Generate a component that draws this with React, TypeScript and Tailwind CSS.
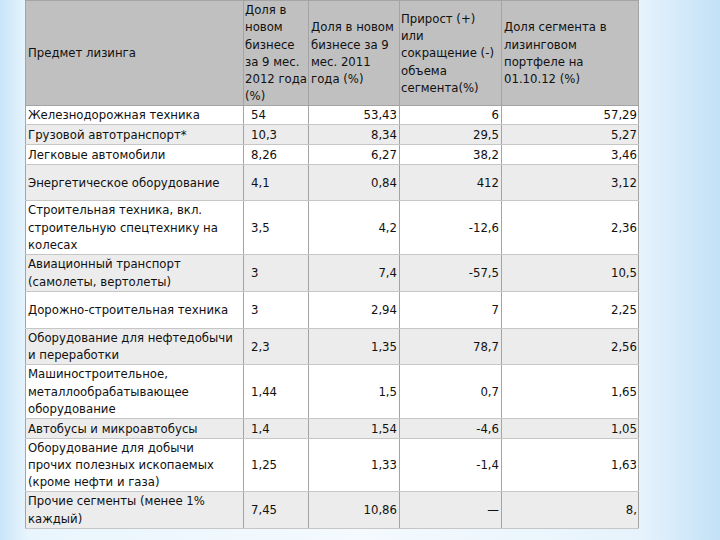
const rows: { name: string[]; a: string; b: string; c: string; d: string; h: string }[] = [
  { name: ["Железнодорожная техника"], a: "54", b: "53,43", c: "6", d: "57,29", h: "h-[19px]" },
  { name: ["Грузовой автотранспорт*"], a: "10,3", b: "8,34", c: "29,5", d: "5,27", h: "h-[20px]" },
  { name: ["Легковые автомобили"], a: "8,26", b: "6,27", c: "38,2", d: "3,46", h: "h-[20px]" },
  { name: ["Энергетическое оборудование"], a: "4,1", b: "0,84", c: "412", d: "3,12", h: "h-[36px]" },
  {
    name: ["Строительная техника, вкл.", "строительную спецтехнику на", "колесах"],
    a: "3,5", b: "4,2", c: "-12,6", d: "2,36", h: "h-[54px]",
  },
  { name: ["Авиационный транспорт", "(самолеты, вертолеты)"], a: "3", b: "7,4", c: "-57,5", d: "10,5", h: "h-[37px]" },
  { name: ["Дорожно-строительная техника"], a: "3", b: "2,94", c: "7", d: "2,25", h: "h-[37px]" },
  { name: ["Оборудование для нефтедобычи", "и переработки"], a: "2,3", b: "1,35", c: "78,7", d: "2,56", h: "h-[36px]" },
  {
    name: ["Машиностроительное,", "металлообрабатывающее", "оборудование"],
    a: "1,44", b: "1,5", c: "0,7", d: "1,65", h: "h-[54px]",
  },
  { name: ["Автобусы и микроавтобусы"], a: "1,4", b: "1,54", c: "-4,6", d: "1,05", h: "h-[20px]" },
  {
    name: ["Оборудование для добычи", "прочих полезных ископаемых", "(кроме нефти и газа)"],
    a: "1,25", b: "1,33", c: "-1,4", d: "1,63", h: "h-[53px]",
  },
  { name: ["Прочие сегменты (менее 1%", "каждый)"], a: "7,45", b: "10,86", c: "—", d: "8,", h: "h-[37px]" },
];

const Lines = ({ lines }: { lines: string[] }) => (
  <>
    {lines.map((l, i) => (
      <div key={i}>{l}</div>
    ))}
  </>
);

const cell = "border-y border-[#c6c6c6] border-x border-x-[#a4a4a4] p-0 overflow-hidden whitespace-nowrap";
const head = "border border-[#a4a4a4] p-0 text-left font-normal whitespace-nowrap overflow-hidden";

export default function App() {
  return (
    <div className="w-[720px] h-[540px] overflow-hidden bg-[linear-gradient(to_right,#c9e5f8_0%,#e9f5fd_4%,#f4fafe_50%,#e6f3fc_89%,#c3e1f6_100%)] font-['DejaVu_Sans_Condensed','DejaVu_Sans',sans-serif] text-[13px] leading-[17.3px] text-[#111]">
      <table className="ml-[25px] w-[613px] table-fixed border-collapse border-t border-[#9a9a9a]">
        <colgroup>
          <col className="w-[218px]" />
          <col className="w-[65px]" />
          <col className="w-[91px]" />
          <col className="w-[102px]" />
          <col className="w-[137px]" />
        </colgroup>
        <thead>
          <tr className="h-[104px] bg-[#c0c0c0] align-middle">
            <th className={`${head} pl-[2px]`}>Предмет лизинга</th>
            <th className={`${head} pl-[1px]`}>
              <Lines lines={["Доля в", "новом", "бизнесе", "за 9 мес.", "2012 года", "(%)"]} />
            </th>
            <th className={`${head} pl-[2px]`}>
              <Lines lines={["Доля в новом", "бизнесе за 9", "мес. 2011", "года (%)"]} />
            </th>
            <th className={`${head} pl-[1px]`}>
              <Lines lines={["Прирост (+)", "или", "сокращение (-)", "объема", "сегмента(%)"]} />
            </th>
            <th className={`${head} pl-[2px]`}>
              <Lines lines={["Доля сегмента в", "лизинговом", "портфеле на", "01.10.12 (%)"]} />
            </th>
          </tr>
        </thead>
        <tbody>
          {rows.map((r, i) => (
            <tr key={i} className={`${r.h} ${i % 2 === 1 ? "bg-[#ececec]" : "bg-white"} align-middle`}>
              <td className={`${cell} pl-[2px]`}>
                <Lines lines={r.name} />
              </td>
              <td className={`${cell} pl-[7px]`}>{r.a}</td>
              <td className={`${cell} pr-[2px] text-right`}>{r.b}</td>
              <td className={`${cell} pr-[2px] text-right`}>{r.c}</td>
              <td className={`${cell} pr-[1px] text-right`}>{r.d}</td>
            </tr>
          ))}
        </tbody>
      </table>
    </div>
  );
}
